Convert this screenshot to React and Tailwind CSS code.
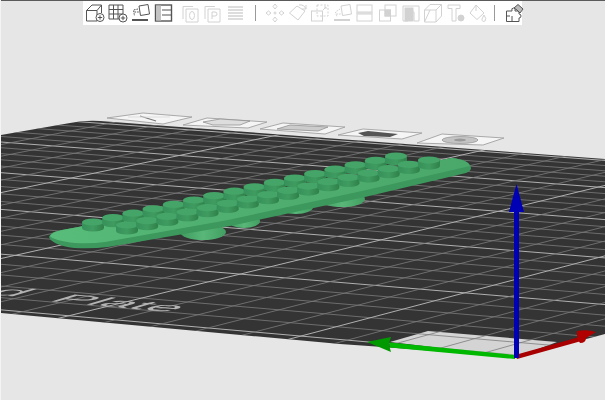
const V1 = [4000, -640];
const V2 = [-14000, -915];
const fan = (v, p) => {
  const farX = 1400;
  const s = (p[1] - v[1]) / (p[0] - v[0]);
  return { x1: -20, y1: p[1] + s * (-20 - p[0]), x2: farX, y2: p[1] + s * (farX - p[0]) };
};
const edgeY = (x) => 313 + 0.0885 * (x - 1) + 3;
const xLines = [];
for (let k = -2; k <= 26; k++) {
  const x = 515 - 46.5 * k;
  xLines.push({ ...fan(V1, [x, edgeY(x)]), major: k % 5 === 0 });
}
const yLines = [];
const n = 25, r = 0.62, yb = 336, yt = 138;
for (let k = 0; k <= n; k++) {
  const t = k / n;
  const y = yb - (yb - yt) * (t / (t + r * (1 - t)));
  yLines.push({ ...fan(V2, [300, y]), major: k % 5 === 0 });
}
const BED = "M1 135 L70 123 Q85 120 100 121 L605 159 L605 334 L515 358 Q430 350 340 344 L1 313 Z";
const back = [];
for (let k = 0; k < 16; k++) back.push([93 + 20.2 * k, 225 - 4.4 * k]);
const front = [];
for (let k = 0; k < 16; k++) front.push([127 + 20.13 * k, 228 - 4.33 * k]);
const Stud = ({ p }) => (
  <g>
    <path d={`M${p[0] - 11} ${p[1] - 3} V${p[1] + 3} A11 3.6 0 0 0 ${p[0] + 11} ${p[1] + 3} V${p[1] - 3} Z`} fill="url(#studSide)" />
    <ellipse cx={p[0]} cy={p[1] - 3} rx={11} ry={3.6} fill="#45a467" />
  </g>
);
const Plaque = ({ pts, children }) => (
  <g>
    <polygon points={pts} fill="#f5f5f5" stroke="#a0a0a0" strokeWidth="0.9" />
    {children}
  </g>
);
const I = ({ children, className = "text-[#555555]" }) => (
  <svg viewBox="0 0 20 20" fill="none" stroke="currentColor" strokeWidth="1" className={`w-5 h-5 shrink-0 ${className}`}>
    {children}
  </svg>
);
const off = "text-[#d2d2d2]";
const Sep = () => <div className="w-px h-4 bg-[#9a9a9a]" />;

export default function App() {
  return (
    <div className="relative w-[605px] h-[400px] overflow-hidden bg-[#e6e6e6]">
      <svg viewBox="0 0 605 400" className="absolute inset-0 w-[605px] h-[400px] blur-[0.25px]">
        <defs>
          <clipPath id="bed"><path d={BED} /></clipPath>
          <linearGradient id="studSide" x1="0" x2="1" y1="0" y2="0">
            <stop offset="0" stopColor="#36905a" />
            <stop offset="0.5" stopColor="#3f9c60" />
            <stop offset="1" stopColor="#2f8049" />
          </linearGradient>
          <linearGradient id="top" x1="0" x2="1" y1="0" y2="0">
            <stop offset="0" stopColor="#58bd7a" />
            <stop offset="0.35" stopColor="#50b071" />
            <stop offset="1" stopColor="#4aa86b" />
          </linearGradient>
          <linearGradient id="foot" x1="0" x2="1" y1="0" y2="0">
            <stop offset="0" stopColor="#3f9a5e" />
            <stop offset="0.5" stopColor="#58b779" />
            <stop offset="1" stopColor="#429f62" />
          </linearGradient>
        </defs>
        <rect x="0" y="0" width="605" height="1" fill="#5a5a5a" />
        <rect x="0" y="0" width="1" height="400" fill="#f4f4f4" />
        <Plaque pts="107,118 143,113 192,117 163,124">
          <path d="M140 116 L156 121" stroke="#777" strokeWidth="1.2" />
          <path d="M128 117 L170 117" stroke="#ddd" />
        </Plaque>
        <Plaque pts="183,125 207,118 267,122 248,128">
          <path d="M203 122 L220 119 L250 121 L240 125 L213 125 Z" fill="#ddd" stroke="#888" strokeWidth="0.7" />
        </Plaque>
        <Plaque pts="260,129 283,123 345,127 325,134">
          <path d="M277 129 L290 125 L328 127 L318 131 Z" fill="#ccc" stroke="#888" strokeWidth="0.7" />
        </Plaque>
        <Plaque pts="338,135 363,129 422,133 402,139">
          <path d="M358 133 L368 131 L398 134 L390 137 L364 136 Z" fill="#555" />
        </Plaque>
        <Plaque pts="417,143 442,134 504,138 483,145">
          <ellipse cx="460" cy="140" rx="18" ry="3.5" fill="#c4c4c4" stroke="#999" strokeWidth="0.8" />
          <ellipse cx="460" cy="140" rx="6" ry="1.5" fill="#999" />
        </Plaque>
        <path d={BED} fill="#333433" />
        <g clipPath="url(#bed)">
          <polygon points="390,342 428,331 557,342 517,357" fill="#d4d4d4" />
          {yLines.map((l, i) => (
            <line key={i} x1={l.x1} y1={l.y1} x2={l.x2} y2={l.y2} stroke={l.major ? "#b0b0b0" : "#7c7c7c"} strokeWidth={l.major ? 1 : 0.8} />
          ))}
          {xLines.map((l, i) => (
            <line key={i} x1={l.x1} y1={l.y1} x2={l.x2} y2={l.y2} stroke={l.major ? "#b0b0b0" : "#7c7c7c"} strokeWidth={l.major ? 1 : 0.8} />
          ))}
          <text x="0" y="0" transform="matrix(2.7 0.24 -1.7 0.5 47 301)" fontFamily="Liberation Sans, sans-serif" fontSize="20" fill="#b4b4b4">Plate</text>
          <text x="0" y="0" transform="matrix(2.7 0.24 -1.7 0.5 -14 294)" fontFamily="Liberation Sans, sans-serif" fontSize="20" fill="#b4b4b4">d</text>
        </g>
        <ellipse cx="203" cy="232" rx="23" ry="8" fill="url(#foot)" />
        <ellipse cx="244" cy="221" rx="16" ry="7" fill="url(#foot)" />
        <ellipse cx="296" cy="207" rx="17" ry="7" fill="url(#foot)" />
        <ellipse cx="342" cy="199" rx="23" ry="8" fill="url(#foot)" />
        <path d="M49 237 Q50 232 62 230 L452 158 Q470 160 471 168 Q471 171 466 173 L365 197 L230 226 L108 247 Q92 249 74 248 Q52 245 49 237 Z" fill="#3c985c" />
        <path d="M50 236 Q52 232 62 230 L452 158 Q468 160 470 166 L362 191 L228 220 L105 242 Q90 244 75 243 Q55 241 50 236 Z" fill="url(#top)" />
        {back.map((p, i) => <Stud key={i} p={p} />)}
        {front.map((p, i) => <Stud key={i} p={p} />)}
        <path d="M515 355 L390 342.5 L390 347.5 L515 359 Z" fill="#00b800" />
        <path d="M367 342 L391 337 Q388 344 391 352 Z" fill="#009a00" />
        <path d="M515 355 L583 336 L585 340 L517 359 Z" fill="#a80000" />
        <path d="M577 331 Q588 329 596 332 L586 338 Q586 343 580 343 Q576 338 577 331 Z" fill="#b00000" />
        <rect x="514" y="210" width="5" height="148" fill="#0000b4" />
        <path d="M516.5 184 L509 212 L524 212 Z" fill="#0000b4" />
      </svg>

      <div className="relative flex pt-px pl-[83px]">
        <div className="flex items-center w-[439px] h-[24px] bg-white pl-[2px]">
          <div className="flex gap-[3px]">
            <I>
              <path d="M1.5 7.5 L7 2 H16.5 V10 M1.5 7.5 H12 V18 H1.5 Z M12 7.5 L16.5 2" />
              <circle cx="15" cy="14.5" r="4" fill="#fff" />
              <path d="M12.8 14.5 H17.2 M15 12.3 V16.7" />
            </I>
            <I>
              <path d="M1 2 H15 V11 M1 2 V16 H11 M5.5 2 V16 M10 2 V16 M1 6.5 H15 M1 11 H15" />
              <circle cx="15" cy="15" r="4" fill="#fff" />
              <path d="M12.8 15 H17.2 M15 12.8 V17.2" />
            </I>
            <I>
              <path d="M8 3 L17 1.5 L18.5 11 L9.5 12.5 Z" />
              <path d="M7 6 L2.5 7 L3.5 13 M3.5 9 H8" strokeDasharray="1.6 1" />
              <path d="M1 17 H17" strokeWidth="2" />
            </I>
            <I>
              <rect x="1.5" y="2" width="16" height="16" strokeWidth="1.4" />
              <rect x="2" y="2.5" width="5" height="15" fill="#c4c4c4" stroke="none" />
              <path d="M8 7 H17.5 M8 12 H17.5" strokeWidth="1.2" />
            </I>
          </div>
          <div className="flex gap-[2px] ml-[7px]">
            <I className={off}>
              <path d="M2 3.5 H12 M2 3.5 V16 M5 6 H17 V19 H5 Z" />
              <ellipse cx="11" cy="12.5" rx="2.5" ry="4" />
            </I>
            <I className={off}>
              <path d="M2 3.5 H12 M2 3.5 V16 M5 6 H17 V19 H5 Z" />
              <path d="M9 16 V9 H12 Q14 9 14 11 Q14 13 12 13 H9" />
            </I>
            <I className={off}>
              <path d="M3 4 H18 M3 7 H18 M3 10 H18 M3 13 H18 M3 16 H18" strokeWidth="1.7" />
            </I>
          </div>
          <div className="ml-[10px] mr-[9px]"><Sep /></div>
          <div className="flex gap-[2.6px]">
            <I className={off}>
              <path d="M10 1 L12 3.5 L10 6 L8 3.5 Z M10 14 L12 16.5 L10 19 L8 16.5 Z M1 10 L3.5 8 L6 10 L3.5 12 Z M14 10 L16.5 8 L19 10 L16.5 12 Z" />
              <circle cx="10" cy="10" r="1" />
            </I>
            <I className={off}>
              <path d="M1.5 10 L9 3 L17 8 L10 17 Z" />
              <path d="M11 2 A6 6 0 0 1 18 6 M18 2 V6 H14" />
            </I>
            <I className={off}>
              <rect x="1.5" y="8" width="11" height="10" />
              <rect x="7" y="2" width="11" height="11" strokeDasharray="2 1.5" />
              <path d="M13 7 L16 4 M14 4 H16 V6" />
            </I>
            <I className={off}>
              <path d="M8 3 L17 1.5 L18.5 11 L9.5 12.5 Z" />
              <path d="M7 6 L2.5 9 L4 14 M3.5 11 H8" strokeDasharray="1.6 1" />
              <path d="M1 17 H17" strokeWidth="2" />
            </I>
            <I className={off}>
              <rect x="2" y="2" width="15" height="7" />
              <rect x="2" y="11" width="15" height="7" />
              <path d="M1 10 H18" />
            </I>
            <I className={off}>
              <rect x="1.5" y="7" width="11" height="11" />
              <rect x="7" y="2" width="11" height="11" />
              <rect x="7" y="7" width="5.5" height="6" fill="currentColor" />
            </I>
            <I className={off}>
              <path d="M2 18 V3 H18 V18 H13 V9 H7 V18 Z" />
              <rect x="4" y="5" width="8" height="13" fill="currentColor" />
            </I>
            <I className={off}>
              <path d="M1.5 7 H13 V19 H1.5 Z M1.5 7 L7 1.5 H18.5 V13 L13 19 M13 7 L18.5 1.5 M1.5 19 L7 7" />
            </I>
            <I className={off}>
              <path d="M2 2 H14 V5.5 H10 V18 H6 V5.5 H2 Z" />
              <circle cx="15" cy="15" r="3" fill="currentColor" />
            </I>
            <I className={off}>
              <path d="M8 2 L16 10 L9 16.5 L2 10 Z M8 2 V8" />
              <path d="M16 12 Q19 16 17 18 Q14 19.5 14 16 Z" />
            </I>
          </div>
          <div className="ml-[6px] mr-[10px]"><Sep /></div>
          <I>
            <path d="M1.5 8 H7 Q6 5 8.5 5 Q11 5 10 8 H14 V11 Q16 11 16 13 Q16 15 14 15 V18.5 H1.5 Z" />
            <path d="M1.5 13 H5 M7 13 V18.5" />
            <path d="M9 5 L13 1.5 L18 6 L15 10 L12 7 Z" fill="#bbb" />
          </I>
        </div>
      </div>
    </div>
  );
}
